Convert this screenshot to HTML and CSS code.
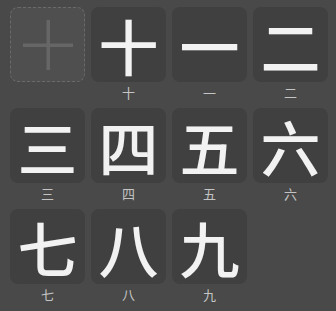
FILE: index.html
```html
<!DOCTYPE html>
<html lang="zh">
<head>
  <meta charset="UTF-8" />
  <title>数字</title>
  <link rel="stylesheet" href="styles.css">
</head>
<body>
  <div class="grid">
    <div class="cell">
      <div class="tile add">
        <svg width="50" height="50" viewBox="0 0 50 50">
          <rect x="0" y="23.5" width="50" height="3.5" fill="#666"/>
          <rect x="23.5" y="0" width="3.5" height="50" fill="#666"/>
        </svg>
      </div>
    </div>
    <div class="cell"><div class="tile">十</div><div class="label">十</div></div>
    <div class="cell"><div class="tile">一</div><div class="label">一</div></div>
    <div class="cell"><div class="tile">二</div><div class="label">二</div></div>
    <div class="cell"><div class="tile">三</div><div class="label">三</div></div>
    <div class="cell"><div class="tile">四</div><div class="label">四</div></div>
    <div class="cell"><div class="tile">五</div><div class="label">五</div></div>
    <div class="cell"><div class="tile">六</div><div class="label">六</div></div>
    <div class="cell"><div class="tile">七</div><div class="label">七</div></div>
    <div class="cell"><div class="tile">八</div><div class="label">八</div></div>
    <div class="cell"><div class="tile">九</div><div class="label">九</div></div>
  </div>
</body>
</html>
```

FILE: styles.css
```css
body {
  margin: 0;
  background: #494949;
  font-family: "Noto Sans CJK SC", "Noto Sans", sans-serif;
}

.grid {
  display: grid;
  grid-template-columns: repeat(4, 75px);
  column-gap: 6px;
  row-gap: 6px;
  padding: 7px 0 0 10px;
}

.cell {
  display: flex;
  flex-direction: column;
  align-items: center;
}

.tile {
  width: 75px;
  height: 75px;
  box-sizing: border-box;
  border-radius: 8px;
  background: #404040;
  color: #f2f2f2;
  font-size: 60px;
  font-weight: 500;
  line-height: 75px;
  text-align: center;
}

.tile.add {
  background: #4f4f4f;
  border: 1px dashed #6a6a6a;
  display: flex;
  align-items: center;
  justify-content: center;
}

.label {
  margin-top: 1px;
  font-size: 13px;
  line-height: 19px;
  color: #c4c4c4;
}
```
